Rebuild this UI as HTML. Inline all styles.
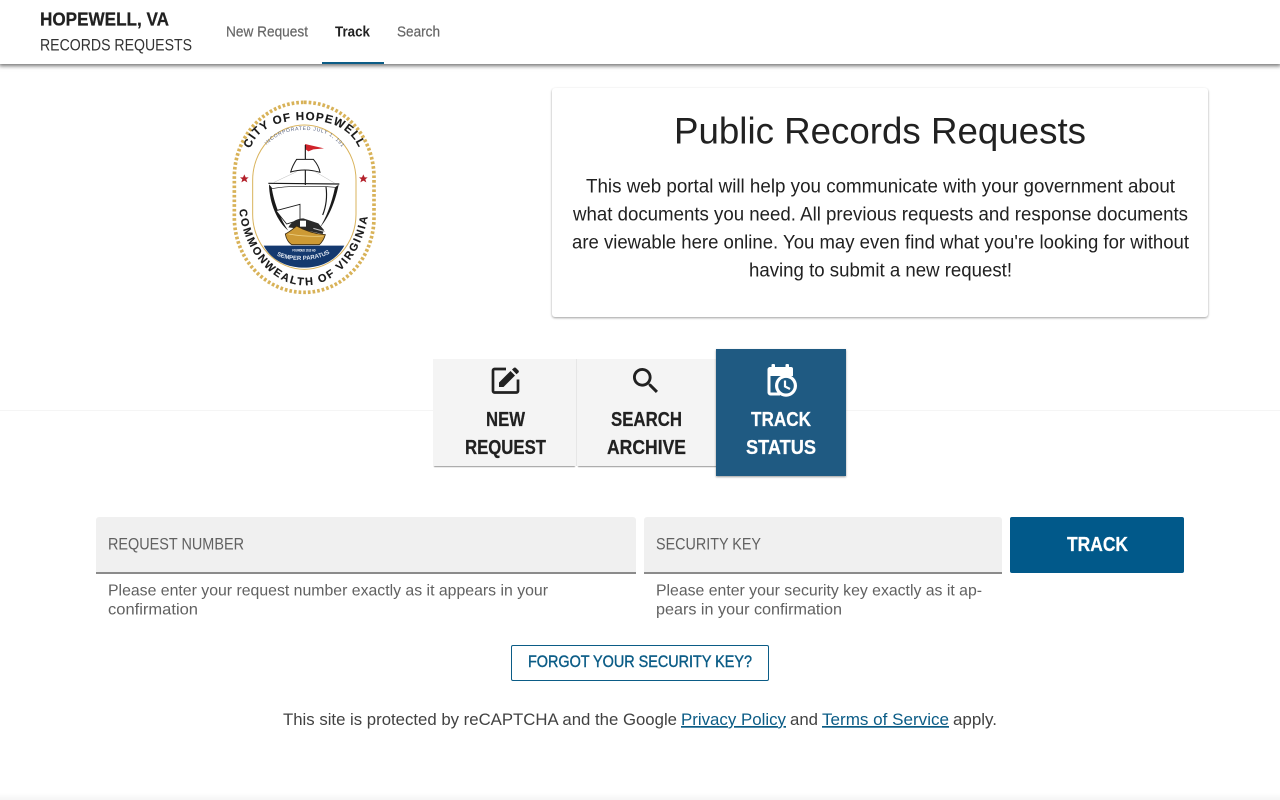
<!DOCTYPE html>
<html lang="en"><head><meta charset="utf-8"><title>Hopewell, VA Records Requests</title>
<style>
html,body{margin:0;padding:0;width:1280px;height:800px;overflow:hidden;background:#fff}
div{position:absolute;box-sizing:border-box}
svg{position:absolute;overflow:visible}
text{font-family:"Liberation Sans",sans-serif}
.m{stroke:currentColor;stroke-width:.4px}
.b{stroke:currentColor;stroke-width:.25px}
</style></head><body>
<div style="left:0;top:410px;width:1280px;height:1px;background:#f5f5f5"></div>
<div style="left:0;top:0;width:1280px;height:64px;background:#fff;box-shadow:0 1px 4px 1px rgba(0,0,0,.55)"></div>
<div style="left:322px;top:62px;width:62px;height:2px;background:#0b5c86"></div>
<div style="left:552px;top:88px;width:656px;height:229px;background:#fff;border-radius:3px;box-shadow:0 1px 2px rgba(0,0,0,.38)"></div>
<div style="left:433px;top:359px;width:143px;height:107px;background:#f4f4f4;box-shadow:0 2px 1px -1px rgba(0,0,0,.4)"></div>
<div style="left:576px;top:359px;width:1px;height:107px;background:#e6e6e6;box-shadow:0 2px 1px -1px rgba(0,0,0,.4)"></div>
<div style="left:577px;top:359px;width:142px;height:107px;background:#f4f4f4;box-shadow:0 2px 1px -1px rgba(0,0,0,.4)"></div>
<div style="left:716px;top:349px;width:130px;height:127px;background:#1f5a82;box-shadow:0 1px 2px rgba(0,0,0,.4)"></div>
<div style="left:96px;top:517px;width:540px;height:57px;background:#f0f0f0;border-bottom:2px solid #8b8b8b;border-radius:3px 3px 0 0"></div>
<div style="left:644px;top:517px;width:358px;height:57px;background:#f0f0f0;border-bottom:2px solid #8b8b8b;border-radius:3px 3px 0 0"></div>
<div style="left:1010px;top:517px;width:174px;height:56px;background:#01598a;border-radius:2px"></div>
<div style="left:511px;top:645px;width:258px;height:36px;border:1px solid #0b5c86;border-radius:2px"></div>
<div style="left:0;top:793px;width:1280px;height:7px;background:linear-gradient(#fff,#f5f5f5)"></div>

<svg width="1280" height="800" viewBox="0 0 1280 800" style="left:0;top:0">
<text class="b" color="#212121" x="40" y="25.500" font-size="18.500" font-weight="700" textLength="129" lengthAdjust="spacingAndGlyphs" fill="#212121">HOPEWELL, VA</text>
<text x="40" y="50.500" font-size="16.500" textLength="152" lengthAdjust="spacingAndGlyphs" fill="#333">RECORDS REQUESTS</text>
<text class="m" style="stroke-width:.2px" x="226" y="36.500" font-size="14.500" textLength="82" lengthAdjust="spacingAndGlyphs" fill="#666" color="#666">New Request</text>
<text x="335" y="36.500" font-size="14.500" font-weight="700" textLength="35" lengthAdjust="spacingAndGlyphs" fill="#212121">Track</text>
<text class="m" style="stroke-width:.2px" x="397" y="36.500" font-size="14.500" textLength="43" lengthAdjust="spacingAndGlyphs" fill="#666" color="#666">Search</text>

<text x="674" y="143.500" font-size="37.500" textLength="412" lengthAdjust="spacingAndGlyphs" fill="#212121">Public Records Requests</text>
<g font-size="19" fill="#212121">
<text x="586" y="192.500" textLength="589" lengthAdjust="spacingAndGlyphs">This web portal will help you communicate with your government about</text>
<text x="573" y="220.500" textLength="615" lengthAdjust="spacingAndGlyphs">what documents you need. All previous requests and response documents</text>
<text x="572" y="248.500" textLength="617" lengthAdjust="spacingAndGlyphs">are viewable here online. You may even find what you're looking for without</text>
<text x="749" y="276.500" textLength="263" lengthAdjust="spacingAndGlyphs">having to submit a new request!</text>
</g>

<!-- icons -->
<path d="M506 369H494.500a1.500 1.500 0 0 0-1.500 1.500V391a1.500 1.500 0 0 0 1.500 1.500H516.500a1.500 1.500 0 0 0 1.500-1.500V379.500" fill="none" stroke="#212121" stroke-width="2.700"/>
<path d="M499 386V381.500L510.500 370L515 374.500L503.500 386ZM512 368.500L514 366.800Q515 366.200 516 367L518.500 369.500Q519.200 370.500 518.500 371.500L516.500 373.200Z" fill="#212121" transform="translate(0,1)"/>
<path transform="translate(628.700,363.700) scale(1.430)" fill="#212121" d="M15.500 14h-.79l-.28-.27C15.410 12.590 16 11.110 16 9.500 16 5.910 13.090 3 9.500 3S3 5.910 3 9.500 5.910 16 9.500 16c1.610 0 3.090-.59 4.230-1.570l.27.28v.79l5 4.990L20.490 19l-4.990-5zm-6 0C7.010 14 5 11.990 5 9.500S7.010 5 9.500 5 14 7.010 14 9.500 11.990 14 9.500 14z"/>
<g>
<rect x="771.500" y="364" width="3.500" height="5" rx="1" fill="#fff"/><rect x="785.500" y="364" width="3.500" height="5" rx="1" fill="#fff"/>
<path d="M770 367H791a2 2 0 0 1 2 2V376H767.500V369.500a2.500 2.500 0 0 1 2.500-2.500Z" fill="#fff"/>
<path d="M769 375V392.500a1.500 1.500 0 0 0 1.500 1.500H780" fill="none" stroke="#fff" stroke-width="3"/>
<circle cx="786" cy="385.700" r="11" fill="#fff"/><circle cx="786" cy="385.700" r="7.800" fill="#1f5a82"/>
<path d="M785 380.500V386.500L790 389" fill="none" stroke="#fff" stroke-width="2.200"/>
</g>

<g font-size="20.500" font-weight="700" fill="#212121" color="#212121" class="b">
<text x="486" y="426" textLength="39" lengthAdjust="spacingAndGlyphs">NEW</text>
<text x="465" y="454" textLength="81" lengthAdjust="spacingAndGlyphs">REQUEST</text>
<text x="611" y="426" textLength="71" lengthAdjust="spacingAndGlyphs">SEARCH</text>
<text x="607" y="454" textLength="79" lengthAdjust="spacingAndGlyphs">ARCHIVE</text>
<g fill="#fff" color="#fff"><text x="751" y="426" textLength="60" lengthAdjust="spacingAndGlyphs">TRACK</text>
<text x="746" y="454" textLength="70" lengthAdjust="spacingAndGlyphs">STATUS</text></g>
</g>

<g font-size="16.500" fill="#616161">
<text x="108" y="549.500" textLength="136" lengthAdjust="spacingAndGlyphs">REQUEST NUMBER</text>
<text x="656" y="549.500" textLength="105" lengthAdjust="spacingAndGlyphs">SECURITY KEY</text>
</g>
<g font-size="16" fill="#616161">
<text x="108" y="595.500" textLength="440" lengthAdjust="spacingAndGlyphs">Please enter your request number exactly as it appears in your</text>
<text x="108" y="614.500" textLength="90" lengthAdjust="spacingAndGlyphs">confirmation</text>
<text x="656" y="595.500" textLength="326" lengthAdjust="spacingAndGlyphs">Please enter your security key exactly as it ap-</text>
<text x="656" y="614.500" textLength="186" lengthAdjust="spacingAndGlyphs">pears in your confirmation</text>
</g>
<text class="b" color="#fff" x="1067" y="551" font-size="20" font-weight="700" textLength="61" lengthAdjust="spacingAndGlyphs" fill="#fff">TRACK</text>
<text class="m" x="528" y="667" font-size="16.500" textLength="224" lengthAdjust="spacingAndGlyphs" fill="#0b5c86" color="#0b5c86">FORGOT YOUR SECURITY KEY?</text>

<g font-size="17" fill="#424242">
<text x="283" y="725" textLength="394" lengthAdjust="spacingAndGlyphs">This site is protected by reCAPTCHA and the Google</text>
<text x="681" y="725" textLength="105" lengthAdjust="spacingAndGlyphs" fill="#0b5c86" text-decoration="underline">Privacy Policy</text>
<text x="790" y="725" textLength="28" lengthAdjust="spacingAndGlyphs">and</text>
<text x="822" y="725" textLength="127" lengthAdjust="spacingAndGlyphs" fill="#0b5c86" text-decoration="underline">Terms of Service</text>
<text x="953" y="725" textLength="44" lengthAdjust="spacingAndGlyphs">apply.</text>
</g>
</svg>

<!-- seal -->
<svg width="170" height="210" viewBox="0 0 510 630" style="left:220px;top:90px">
<defs>
<path id="t1" d="M92 176C108 115 180 90 252 90C325 90 395 112 420 182"/>
<path id="t2" d="M58 358C66 470 150 586 255 586C360 586 442 470 447 340"/>
<path id="t3" d="M140 165C175 128 215 120 252 120C295 120 335 130 365 170"/>
<path id="t4" d="M170 496C205 516 290 516 332 488"/>
</defs>
<rect x="43" y="37" width="419" height="570" rx="209" ry="225" fill="#fff" stroke="#d8b258" stroke-width="11" stroke-dasharray="8 6"/>
<rect x="98" y="105" width="310" height="433" rx="155" ry="165" fill="#fff" stroke="#d9b35c" stroke-width="3"/>
<g font-weight="700" fill="#1a1a1a" font-size="35" stroke="#1a1a1a" stroke-width=".4">
<text><textPath href="#t1" startOffset="0" textLength="390" lengthAdjust="spacing">CITY OF HOPEWELL</textPath></text>
<text font-size="33"><textPath href="#t2" startOffset="0" textLength="630" lengthAdjust="spacing">COMMONWEALTH OF VIRGINIA</textPath></text>
</g>
<text font-size="15" fill="#56607e"><textPath href="#t3" textLength="265" lengthAdjust="spacing">INCORPORATED JULY 1, 1916</textPath></text>
<path d="M73 253L77 262H86L79 268L82 277L73 272L64 277L67 268L60 262H69Z" fill="#b3202a"/>
<path d="M430 253L434 262H443L436 268L439 277L430 272L421 277L424 268L417 262H426Z" fill="#b3202a"/>
<!-- sea -->
<path d="M131 467H373C350 510 305 533 252 533C200 533 153 510 131 467Z" fill="#14396f"/>
<text x="252" y="484" font-size="10" font-weight="700" text-anchor="middle" fill="#fff" textLength="70" lengthAdjust="spacingAndGlyphs">FOUNDED 1613 AD</text>
<text font-size="18" font-weight="700" fill="#dfe6f0"><textPath href="#t4" textLength="165" lengthAdjust="spacing">SEMPER PARATUS</textPath></text>
<!-- flag & masts -->
<path d="M255 162L312 175L280 178L265 184L257 178Z" fill="#d0232b"/>
<path d="M256 165V395" stroke="#1a1a1a" stroke-width="3.500"/>
<!-- top sail -->
<path d="M230 208H280C292 222 298 235 300 247C270 238 240 238 212 246C216 232 222 220 230 208Z" fill="#fff" stroke="#1a1a1a" stroke-width="3"/>
<path d="M145 280L358 282" stroke="#1a1a1a" stroke-width="3.500"/>
<path d="M160 278L230 245M345 280L285 245" stroke="#bbb" stroke-width="1.500"/>
<!-- main sail -->
<path d="M150 285C150 340 175 395 205 420H300C325 380 350 330 355 285Z" fill="#fff"/>
<path d="M147 283C148 340 172 395 205 422C183 390 162 340 155 292Z" fill="#1a1a1a"/>
<path d="M356 284C345 340 325 385 298 415C318 385 335 340 345 292Z" fill="#1a1a1a"/>
<path d="M155 296C190 290 220 288 256 290C285 288 310 288 345 292" fill="none" stroke="#1a1a1a" stroke-width="2"/>
<path d="M318 290C322 320 318 350 308 375" fill="none" stroke="#1a1a1a" stroke-width="3.500"/>
<!-- lower sail -->
<path d="M168 362L240 343V388C225 395 212 398 200 402C190 390 178 375 168 362Z" fill="#fff" stroke="#1a1a1a" stroke-width="2.500"/>
<!-- boat -->
<path d="M205 412C215 392 235 385 250 385L295 400L312 420L308 432L230 415Z" fill="#2a2a2a"/>
<path d="M240 392H258V410H240Z" fill="#fff"/>
<path d="M280 415L315 425" stroke="#ccc" stroke-width="3"/>
<path d="M196 432C212 424 222 414 230 408C260 425 290 432 316 434C312 448 305 458 298 464H215C205 458 198 445 196 432Z" fill="#cd9a35" stroke="#3a2a10" stroke-width="2.500"/>
<path d="M205 432C240 438 280 440 310 438" fill="none" stroke="#f0d58a" stroke-width="2"/>
</svg>
</body></html>
